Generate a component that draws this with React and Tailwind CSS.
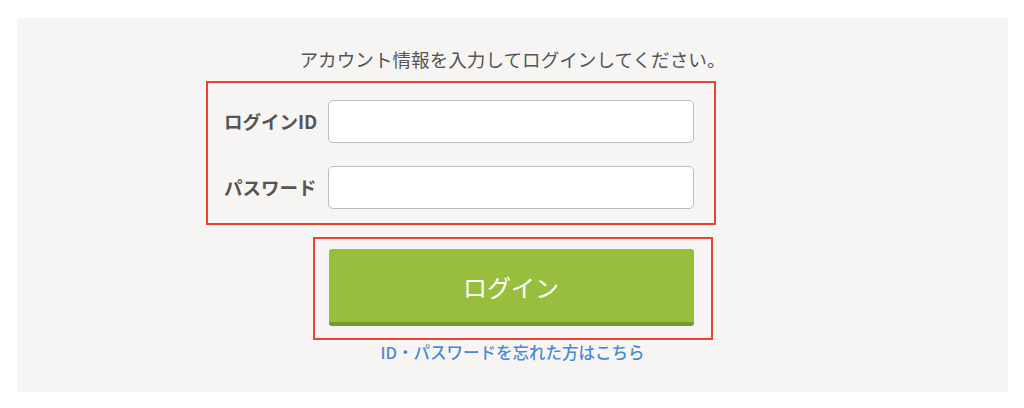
export default function App() {
  return (
    <div className="w-[1024px] h-[408px] bg-white pt-[18px] pl-[17px]" style={{ fontFamily: '"Noto Sans CJK JP", "Noto Sans", sans-serif' }}>
      <div className="w-[991px] h-[374px] bg-[#f6f5f3] flex flex-col items-center pt-[28px]">
        <p className="text-[18.6px] leading-[26px] text-[#555] text-center">アカウント情報を入力してログインしてください。</p>
        <div className="mt-[9px] mr-[103px] w-[510px] h-[144px] border-2 border-[#e8442e] pt-[17px] pl-[16px] pr-[20px] flex flex-col gap-[23px]">
          <div className="flex items-center">
            <label className="w-[104px] text-[18.5px] font-bold text-[#555] leading-none">ログインID</label>
            <input className="w-[366px] h-[43px] bg-white border border-[#bdbdbd] rounded-[5px] outline-none" />
          </div>
          <div className="flex items-center">
            <label className="w-[104px] text-[18.5px] font-bold text-[#555] leading-none">パスワード</label>
            <input type="password" className="w-[366px] h-[43px] bg-white border border-[#bdbdbd] rounded-[5px] outline-none" />
          </div>
        </div>
        <div className="mt-[12px] w-[400px] h-[103px] border-2 border-[#e8442e] pt-[10px] pl-[14px]">
          <button className="w-[365px] h-[77px] bg-[#97bf3d] rounded-[3px] border-b-4 border-[#76992e] text-white text-[24px] leading-none flex items-center justify-center pt-[3px]">
            ログイン
          </button>
        </div>
        <a className="mt-[1px] text-[16.5px] leading-[22px] text-[#4a8bd0] font-medium">ID・パスワードを忘れた方はこちら</a>
      </div>
    </div>
  );
}
